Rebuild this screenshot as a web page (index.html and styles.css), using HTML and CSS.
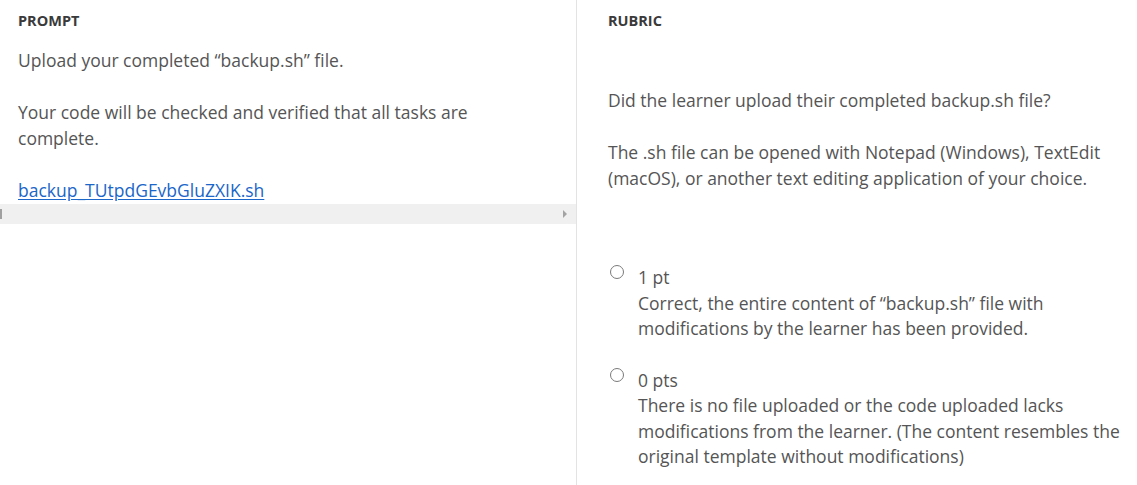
FILE: index.html
```html
<!DOCTYPE html>
<html lang="en">
<head>
<meta charset="utf-8">
<link rel="stylesheet" href="styles.css">
</head>
<body>
<div class="layout">
  <section class="col col-prompt">
    <div class="prompt-inner">
      <h2 class="label">PROMPT</h2>
      <p class="text">Upload your completed “backup.sh” file.</p>
      <p class="text narrow">Your code will be checked and verified that all tasks are complete.</p>
      <p class="text link-line"><a class="file-link" href="#">backup_TUtpdGEvbGluZXIK.sh</a></p>
    </div>
    <div class="hscroll">
      <span class="hscroll-thumb"></span>
      <span class="hscroll-arrow"></span>
    </div>
  </section>
  <section class="col col-rubric">
    <h2 class="label">RUBRIC</h2>
    <div class="rubric-body">
      <p class="text">Did the learner upload their completed backup.sh file?</p>
      <p class="text">The .sh file can be opened with Notepad (Windows), TextEdit (macOS), or another text editing application of your choice.</p>
    </div>
    <div class="options">
      <label class="option">
        <span class="radio"></span>
        <span class="option-text">
          <span class="pts">1 pt</span>
          <span class="desc">Correct, the entire content of “backup.sh” file with modifications by the learner has been provided.</span>
        </span>
      </label>
      <label class="option">
        <span class="radio"></span>
        <span class="option-text">
          <span class="pts">0 pts</span>
          <span class="desc">There is no file uploaded or the code uploaded lacks modifications from the learner. (The content resembles the original template without modifications)</span>
        </span>
      </label>
    </div>
  </section>
</div>
</body>
</html>
```
FILE: styles.css
```css
html, body {
  margin: 0;
  padding: 0;
  background: #ffffff;
}
body {
  font-family: "Open Sans", "Liberation Sans", sans-serif;
  color: #555555;
  font-size: 17.5px;
  line-height: 26px;
}
.layout {
  display: grid;
  grid-template-columns: 577px 1fr;
  height: 485px;
}
.col {
  padding-top: 11px;
}
.col-prompt {
  border-right: 1px solid #e3e3e3;
  display: flex;
  flex-direction: column;
  align-self: stretch;
}
.prompt-inner {
  padding: 0 18px;
}
.label {
  margin: 0;
  font-size: 14.5px;
  font-weight: 700;
  line-height: 20px;
  color: #3a3a3a;
}
.col-prompt .label {
  margin-bottom: 16px;
}
.text {
  margin: 0 0 26px;
}
.narrow {
  max-width: 500px;
}
.link-line {
  margin: 0 0 1px;
}
.file-link {
  color: #1a66c9;
  text-decoration: underline;
  text-underline-offset: 2px;
}
.hscroll {
  height: 20px;
  background: #f0f0f0;
  display: flex;
  align-items: center;
  justify-content: space-between;
  padding-right: 9px;
}
.hscroll-thumb {
  width: 2px;
  height: 10px;
  background: #a0a0a0;
}
.hscroll-arrow {
  width: 0;
  height: 0;
  border-top: 4px solid transparent;
  border-bottom: 4px solid transparent;
  border-left: 4px solid #a3a3a3;
}
.col-rubric {
  padding-left: 31px;
  padding-right: 10px;
}
.rubric-body {
  padding-top: 56px;
}
.rubric-body .text:last-child {
  margin-bottom: 74px;
}
.options {
  display: flex;
  flex-direction: column;
  gap: 26px;
  line-height: 25.5px;
}
.option {
  display: flex;
  align-items: flex-start;
  gap: 14px;
}
.radio {
  width: 12px;
  height: 12px;
  border: 1.3px solid #7a7a7a;
  border-radius: 50%;
  margin-top: 0;
  margin-left: 2px;
  flex: none;
}
.option-text {
  display: flex;
  flex-direction: column;
}
```
